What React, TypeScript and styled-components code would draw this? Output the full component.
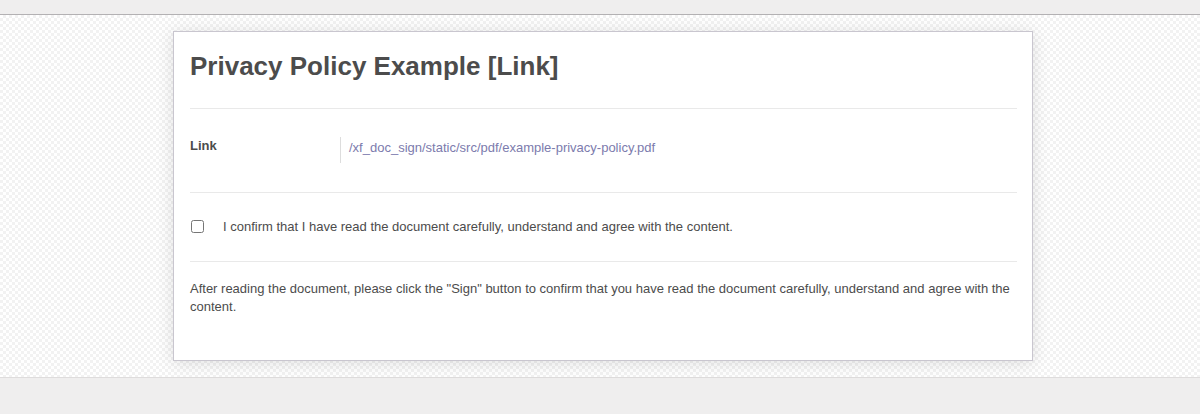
import React from "react";
import styled, { createGlobalStyle } from "styled-components";

const GlobalStyle = createGlobalStyle`
  html, body {
    margin: 0;
    padding: 0;
    background: #efeeee;
  }
  body {
    font-family: "Liberation Sans", Arial, sans-serif;
    font-size: 13px;
    line-height: 1.42857;
    color: #4c4c4c;
  }
`;

const Page = styled.div`
  display: flex;
  flex-direction: column;
  width: 1200px;
  min-height: 414px;
  background: #efeeee;
`;

const TopBar = styled.div`
  height: 14px;
  background: #efeeee;
  border-bottom: 1px solid #b3b1b3;
`;

const SheetArea = styled.div`
  display: flex;
  justify-content: flex-start;
  padding: 16px 0 16px 173px;
  background-color: #ffffff;
  background-image: repeating-conic-gradient(#f2f2f2 0 25%, #ffffff 0 50%);
  background-size: 6px 6px;
  border-bottom: 1px solid #dedcdc;
`;

const Card = styled.div`
  box-sizing: border-box;
  width: 860px;
  height: 330px;
  background: #ffffff;
  border: 1px solid #c9c6cf;
  box-shadow: 0 2px 16px rgba(0, 0, 0, 0.12);
  padding: 19px 15px 0 16px;
`;

const Title = styled.h1`
  margin: 0 0 26px;
  font-size: 26px;
  font-weight: 700;
  line-height: normal;
  color: #4c4c4c;
`;

const Divider = styled.div`
  height: 1px;
  background: #e9e9e9;
`;

const FieldRow = styled.div`
  display: grid;
  grid-template-columns: 150px 1fr;
  padding: 28px 0 29px;
`;

const FieldLabel = styled.div`
  font-weight: 700;
  color: #4c4c4c;
`;

const FieldValue = styled.div`
  box-sizing: border-box;
  height: 26px;
  border-left: 1px solid #dddddd;
  padding: 2px 0 0 8px;
  color: #7c7bad;
`;

const ConfirmRow = styled.label`
  display: flex;
  align-items: center;
  gap: 19px;
  padding: 25px 0 24px;
  height: 19px;
`;

const Checkbox = styled.input`
  margin: 0 0 2px 1px;
  width: 13px;
  height: 13px;
  flex: none;
`;

const Note = styled.p`
  margin: 18px 0 0;
  line-height: 18px;
  color: #4c4c4c;
`;

export default function App() {
  return (
    <>
      <GlobalStyle />
      <Page>
        <TopBar />
        <SheetArea>
          <Card>
            <Title>Privacy Policy Example [Link]</Title>
            <Divider />
            <FieldRow>
              <FieldLabel>Link</FieldLabel>
              <FieldValue>/xf_doc_sign/static/src/pdf/example-privacy-policy.pdf</FieldValue>
            </FieldRow>
            <Divider />
            <ConfirmRow>
              <Checkbox type="checkbox" />
              <span>I confirm that I have read the document carefully, understand and agree with the content.</span>
            </ConfirmRow>
            <Divider />
            <Note>
              After reading the document, please click the "Sign" button to confirm that you have read the document carefully, understand and agree with the content.
            </Note>
          </Card>
        </SheetArea>
      </Page>
    </>
  );
}
